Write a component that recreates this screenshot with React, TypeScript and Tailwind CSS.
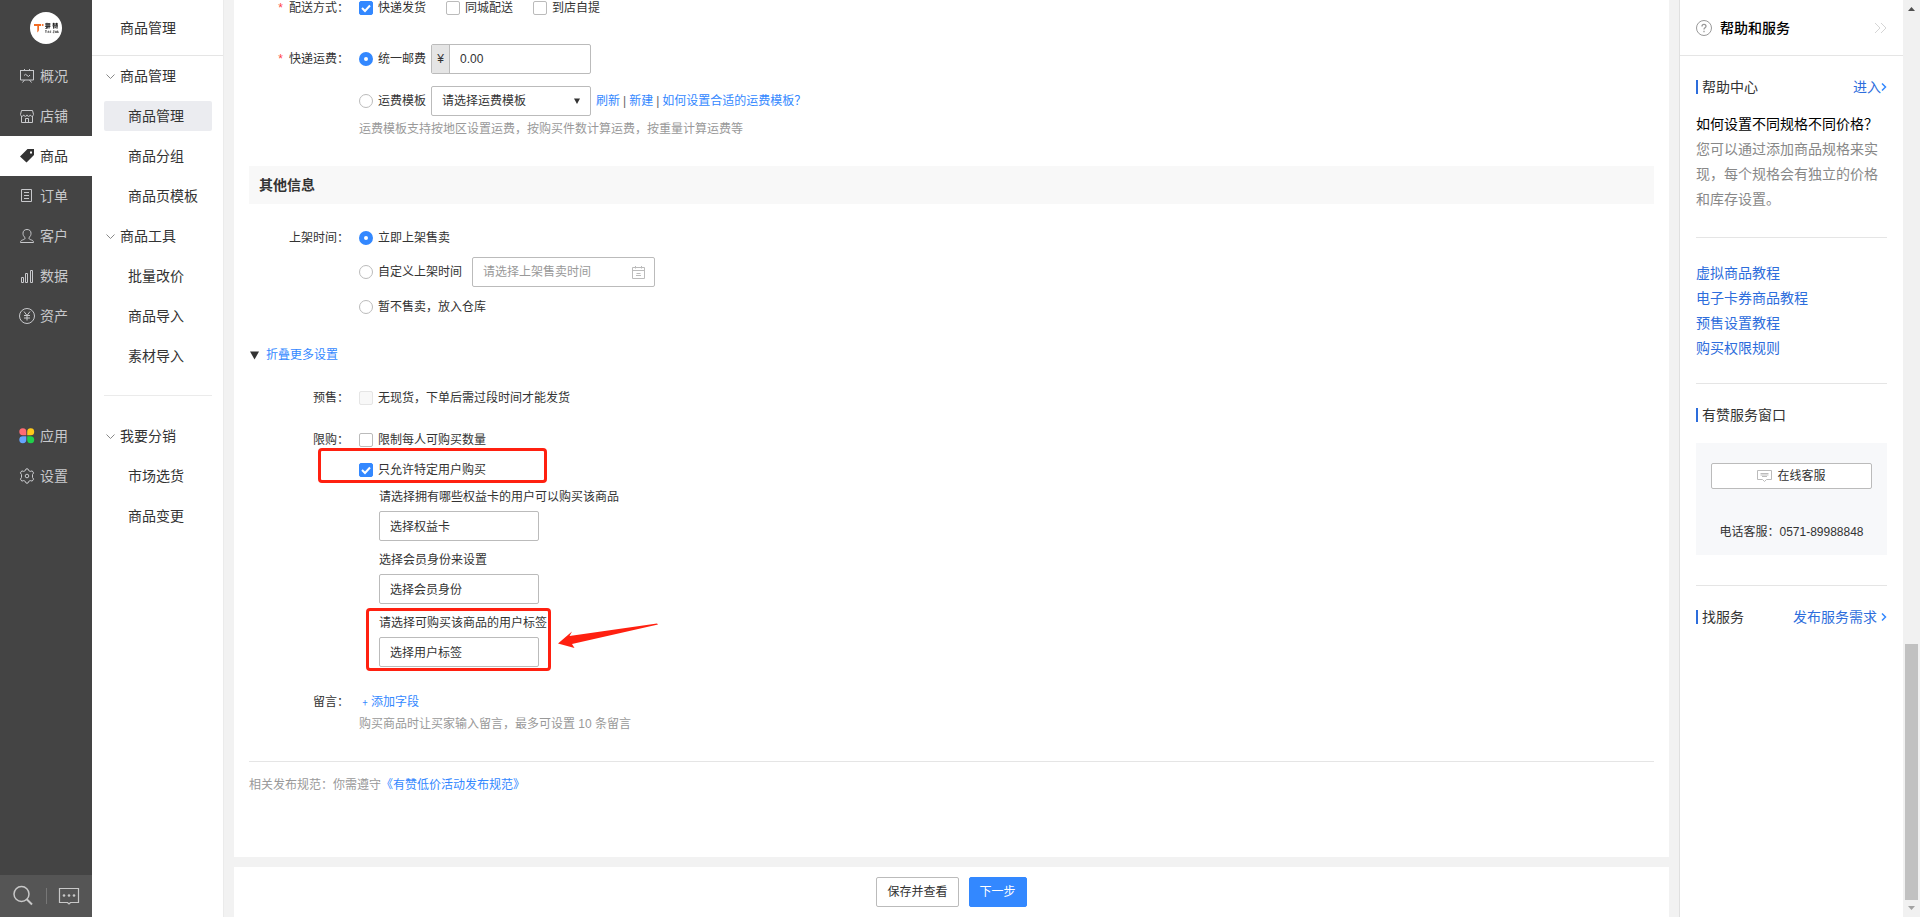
import type { ReactNode } from "react";

const line = { fill: "none", stroke: "currentColor", strokeWidth: 1 } as const;

function OverviewIcon() {
  return (
    <svg viewBox="0 0 16 16" className="h-4 w-4" {...line}>
      <path d="M1 2.500h14M1.500 2.500v9.500h13V2.500M5.500 1v1.500M10.500 1v1.500M5.500 12l-2 2.500M10.500 12l2 2.500M5 7.500l1.500-1.200 3 2.200L11 7" />
    </svg>
  );
}
function StoreIcon() {
  return (
    <svg viewBox="0 0 16 16" className="h-4 w-4" {...line}>
      <path d="M2.500 2.500h11l1 4c0 2-2.800 2.400-3.200.4-.4 2-3 2-3.300 0-.3 2-2.900 2-3.300 0-.4 2-3.200 1.600-3.200-.4zM2.500 8v6.500h11V8M6.500 14v-3.500h3V14" />
    </svg>
  );
}
function GoodsIcon() {
  return (
    <svg viewBox="0 0 16 16" className="h-4 w-4" fill="currentColor">
      <path fillRule="evenodd" d="M8.500 1H15v6L7.500 14.500 1 8.500zM11 3.500v2h2v-2z" />
    </svg>
  );
}
function OrderIcon() {
  return (
    <svg viewBox="0 0 16 16" className="h-4 w-4" {...line}>
      <path d="M2.500 1.500h10v12h-10zM5 4.500h5M5 7.500h5M5 10.500h5" />
    </svg>
  );
}
function CustomerIcon() {
  return (
    <svg viewBox="0 0 16 16" className="h-4 w-4" {...line}>
      <path d="M6 9.500C4.500 8.500 4 7 4 5.200 4 3 5.500 1.500 8 1.500s4 1.500 4 3.700c0 1.800-.5 3.300-2 4.300-.3 1.500.5 1.800 2.500 2.500 1.300.4 2 1 2 2.500h-13c0-1.500.7-2.100 2-2.500 2-.7 2.800-1 2.500-2.500z" />
    </svg>
  );
}
function DataIcon() {
  return (
    <svg viewBox="0 0 16 16" className="h-4 w-4" {...line}>
      <path d="M2.500 9.500h2v5h-2zM6.500 5.500h2v9h-2zM11.500 2.500h2v12h-2z" />
    </svg>
  );
}
function AssetsIcon() {
  return (
    <svg viewBox="0 0 16 16" className="h-4 w-4" {...line}>
      <circle cx="8" cy="8" r="7.500" />
      <path d="M5 3.500l3 4 3-4M8 7.500v5M5 7.500h6M5 10h6" />
    </svg>
  );
}
function AppsIcon() {
  return (
    <svg viewBox="0 0 16 16" className="h-4 w-4">
      <path d="M7.300 7.300H4A3.500 3.500 0 1 1 7.300 4z" fill="#ff6b75" />
      <path d="M8.200 7.300V4a3.500 3.500 0 1 1 3.500 3.300z" fill="#ffc91a" />
      <path d="M7.300 8.200v3.500A3.500 3.500 0 1 1 4 8.200z" fill="#65a5ff" />
      <path d="M8.200 8.200h3.500a3.500 3.500 0 1 1-3.500 3.500z" fill="#20d04b" />
    </svg>
  );
}
function SettingsIcon() {
  return (
    <svg viewBox="0 0 16 16" className="h-4 w-4" {...line}>
      <path d="M6.300 2.600L7 .9h2l.7 1.700 1.500.8 2-.5 1.400 2-1.100 1.700v2.800l1.100 1.700-1.400 2-2-.5-1.500.8-.7 1.700H7l-.7-1.700-1.500-.8-2 .5-1.400-2 1.100-1.700V6.600L1.400 4.900l1.400-2 2 .5z" />
      <circle cx="8" cy="8" r="1.800" />
    </svg>
  );
}

const primary: { name: string; icon: ReactNode; active?: boolean }[] = [
  { name: "概况", icon: <OverviewIcon /> },
  { name: "店铺", icon: <StoreIcon /> },
  { name: "商品", icon: <GoodsIcon />, active: true },
  { name: "订单", icon: <OrderIcon /> },
  { name: "客户", icon: <CustomerIcon /> },
  { name: "数据", icon: <DataIcon /> },
  { name: "资产", icon: <AssetsIcon /> },
];
const secondary: { name: string; icon: ReactNode; active?: boolean }[] = [
  { name: "应用", icon: <AppsIcon /> },
  { name: "设置", icon: <SettingsIcon /> },
];

function PrimaryList({ items }: { items: typeof primary }) {
  return (
    <ul>
      {items.map((i) => (
        <li key={i.name}>
          <a
            href="#"
            className={
              i.active
                ? "flex h-10 items-center gap-[5px] bg-white pl-[19px] text-[#333]"
                : "flex h-10 items-center gap-[5px] pl-[19px] text-[#c8c9cc]"
            }
          >
            {i.icon}
            {i.name}
          </a>
        </li>
      ))}
    </ul>
  );
}

function Sidebar() {
  return (
    <nav aria-label="主导航" className="flex w-[92px] shrink-0 flex-col bg-[#444] text-sm">
      <div className="flex h-14 items-center justify-center">
        <div className="flex h-8 w-8 items-center justify-center rounded-full bg-white">
          <svg viewBox="0 0 26 12" className="h-3 w-[26px]" role="img" aria-label="钛赞">
            <path d="M1 2h7v2H6v3c0 1.700-.5 2.700-1.700 3.500V4H1z" fill="#f26a21" />
            <circle cx="9.700" cy="2.900" r="1" fill="#f26a21" />
            <path
              d="M12 2h5.500M14 .8v6M12 4.200h5.500M12.500 6.500l2-1M16 1v5.500M19.500 2H25M20.700 .8v2.500M23.700 .8v2.500M19.500 3.800H25M20.700 4v2.700M24 4v2.700M22.200 4.500v1.700"
              stroke="#111"
              fill="none"
            />
            <path
              d="M12 8.700h1.800M12.900 8.700V11M15 11V9.200h1V11M17.600 8.500V11M20 8.800h1.400L20 10.700h1.400M22.500 11V9.200h1V11M24.600 11V8.700l.8 2.300"
              stroke="#444"
              strokeWidth=".7"
              fill="none"
            />
          </svg>
        </div>
      </div>
      <PrimaryList items={primary} />
      <div className="h-20" />
      <PrimaryList items={secondary} />
      <div className="mt-auto flex h-[42px] items-center bg-[#555] text-[#c8c8c8]">
        <button type="button" aria-label="搜索" className="flex flex-1 justify-center">
          <svg viewBox="0 0 22 22" className="h-[22px] w-[22px]" fill="none" stroke="currentColor" strokeWidth="1.500">
            <circle cx="9.500" cy="9" r="7.500" />
            <path d="M14.500 14l5.500 5.500" strokeWidth="2" />
          </svg>
        </button>
        <span className="h-4 w-px bg-[#777]" />
        <button type="button" aria-label="消息" className="flex flex-1 justify-center">
          <svg viewBox="0 0 22 20" className="h-5 w-[22px]" fill="none" stroke="currentColor" strokeWidth="1.200">
            <path d="M1.500 2.500h19v14h-8L11 18l-1.500-1.500h-8z" />
            <g fill="currentColor" stroke="none">
              <circle cx="6" cy="9.500" r="1.300" />
              <circle cx="11" cy="9.500" r="1.300" />
              <circle cx="16" cy="9.500" r="1.300" />
            </g>
          </svg>
        </button>
      </div>
    </nav>
  );
}

function MenuGroup({ title, items, active }: { title: string; items: string[]; active?: string }) {
  return (
    <section>
      <button type="button" className="flex h-10 w-full items-center gap-1 pl-[13px]">
        <svg viewBox="0 0 11 11" className="h-[11px] w-[11px] text-[#888]" fill="none" stroke="currentColor">
          <path d="M1.500 3.500l4 4 4-4" />
        </svg>
        {title}
      </button>
      <ul>
        {items.map((i) => (
          <li key={i} className="flex h-10 items-center pr-[11px] pl-3">
            <a
              href="#"
              className={
                i === active
                  ? "flex h-[30px] flex-1 items-center rounded-xs bg-[#ebecf0] pl-6"
                  : "flex h-[30px] flex-1 items-center pl-6"
              }
            >
              {i}
            </a>
          </li>
        ))}
      </ul>
    </section>
  );
}

function SubMenu() {
  return (
    <nav aria-label="商品导航" className="w-[131px] shrink-0 bg-white text-sm text-[#333]">
      <h1 className="flex h-14 items-center border-b border-[#e5e5e5] pl-7">商品管理</h1>
      <MenuGroup title="商品管理" items={["商品管理", "商品分组", "商品页模板"]} active="商品管理" />
      <MenuGroup title="商品工具" items={["批量改价", "商品导入", "素材导入"]} />
      <hr className="mt-[19px] mr-[11px] mb-5 ml-3 border-[#ebebeb]" />
      <MenuGroup title="我要分销" items={["市场选货", "商品变更"]} />
    </nav>
  );
}

function Check({ label, checked, disabled }: { label: string; checked?: boolean; disabled?: boolean }) {
  return (
    <label className="flex items-center gap-[5px]">
      <span className="grid">
        <input
          type="checkbox"
          defaultChecked={checked}
          disabled={disabled}
          className="peer col-start-1 row-start-1 h-[14px] w-[14px] appearance-none rounded-xs border border-[#bbb] bg-white checked:border-[#38f] checked:bg-[#38f] disabled:border-[#e5e5e5] disabled:bg-[#f8f8f8]"
        />
        <svg
          viewBox="0 0 14 14"
          className="pointer-events-none invisible col-start-1 row-start-1 h-[14px] w-[14px] peer-checked:visible"
          fill="none"
          stroke="#fff"
          strokeWidth="2"
        >
          <path d="M3 7l3 3 5-5.500" />
        </svg>
      </span>
      {label}
    </label>
  );
}

function Radio({ label, name, checked }: { label: string; name: string; checked?: boolean }) {
  return (
    <label className="flex items-center gap-[5px]">
      <input
        type="radio"
        name={name}
        defaultChecked={checked}
        className="h-[14px] w-[14px] appearance-none rounded-full border border-[#bbb] bg-white checked:border-5 checked:border-[#38f]"
      />
      {label}
    </label>
  );
}

function Row({ label, required, tall, children }: { label: string; required?: boolean; tall?: boolean; children: ReactNode }) {
  return (
    <div role="group" aria-label={label} className="grid grid-cols-[100px_1fr] items-start gap-x-[10px]">
      <div className={tall ? "flex h-[30px] items-center justify-end gap-[6px]" : "flex h-4 items-center justify-end gap-[6px]"}>
        {required && <span className="text-[#f44]">*</span>}
        <span>{label}：</span>
      </div>
      <div>{children}</div>
    </div>
  );
}

function Picker({ id, label, value }: { id: string; label: string; value: string }) {
  return (
    <div>
      <label htmlFor={id} className="block">
        {label}
      </label>
      <input
        id={id}
        readOnly
        value={value}
        className="mt-[6px] block h-[30px] w-40 rounded-xs border border-[#bbb] bg-white px-[10px] pb-[2px]"
      />
    </div>
  );
}

const link = "text-[#38f]";

function GoodsForm() {
  return (
    <form className="flex min-h-0 flex-1 flex-col">
      <div className="flex-1 overflow-hidden bg-white px-[15px]">
        <Row label="配送方式" required>
          <div className="flex gap-5">
            <Check label="快递发货" checked />
            <Check label="同城配送" />
            <Check label="到店自提" />
          </div>
        </Row>
        <div className="mt-7">
          <Row label="快递运费" required tall>
            <div className="flex h-[30px] items-center gap-[5px]">
              <Radio name="fee" label="统一邮费" checked />
              <div className="flex h-[30px] w-40 overflow-hidden rounded-xs border border-[#bbb]">
                <span className="flex w-[18px] items-center justify-center border-r border-[#bbb] bg-[#e5e5e5]">¥</span>
                <input aria-label="统一邮费金额" defaultValue="0.00" className="min-w-0 flex-1 px-[10px]" />
              </div>
            </div>
            <div className="mt-3 flex h-[30px] items-center gap-[5px]">
              <Radio name="fee" label="运费模板" />
              <div className="grid w-40 items-center">
                <select
                  aria-label="运费模板选择"
                  className="col-start-1 row-start-1 h-[30px] appearance-none rounded-xs border border-[#bbb] bg-white px-[10px]"
                >
                  <option>请选择运费模板</option>
                </select>
                <svg viewBox="0 0 8 8" className="pointer-events-none col-start-1 row-start-1 mr-[10px] h-2 w-2 justify-self-end">
                  <path d="M1 1.500h6L4 7z" fill="#333" />
                </svg>
              </div>
              <div className="flex gap-[3px] text-[#666]">
                <a href="#" className={link}>刷新</a>
                <span>|</span>
                <a href="#" className={link}>新建</a>
                <span>|</span>
                <a href="#" className={link}>如何设置合适的运费模板？</a>
              </div>
            </div>
            <p className="mt-[5px] text-[#999]">运费模板支持按地区设置运费，按购买件数计算运费，按重量计算运费等</p>
          </Row>
        </div>

        <h2 className="mt-[29px] mb-[26px] flex h-[38px] items-center bg-[#f8f8f8] pl-[10px] text-sm font-bold">其他信息</h2>

        <Row label="上架时间">
          <Radio name="time" label="立即上架售卖" checked />
          <div className="mt-[11px] flex items-center gap-[10px]">
            <Radio name="time" label="自定义上架时间" />
            <div className="flex h-[30px] w-[183px] items-center rounded-xs border border-[#bbb] pr-[9px] pl-[10px]">
              <input
                aria-label="上架售卖时间"
                placeholder="请选择上架售卖时间"
                className="min-w-0 flex-1 placeholder:text-[#999]"
              />
              <svg viewBox="0 0 13 13" className="h-[13px] w-[13px] text-[#bbb]" fill="none" stroke="currentColor">
                <path d="M.5 1.500h12v11H.5zM.5 4.500h12M3.500 0v2.500M9.500 0v2.500M4.500 7.500h4M4 9.500h5" />
              </svg>
            </div>
          </div>
          <div className="mt-3">
            <Radio name="time" label="暂不售卖，放入仓库" />
          </div>
        </Row>

        <button type="button" className="mt-8 mb-[27px] flex items-center gap-[7px] pl-px text-[#38f]">
          <svg viewBox="0 0 9 9" className="h-[9px] w-[9px]">
            <path d="M0 .5h9L4.500 8.500z" fill="#333" />
          </svg>
          折叠更多设置
        </button>

        <Row label="预售">
          <Check label="无现货，下单后需过段时间才能发货" disabled />
        </Row>
        <div className="mt-[26px]">
          <Row label="限购">
            <Check label="限制每人可购买数量" />
            <div className="relative mt-[14px]">
              <Check label="只允许特定用户购买" checked />
              <span className="pointer-events-none absolute -top-[14px] -left-[41px] h-[35px] w-[229px] rounded-sm border-3 border-[#ff2010]" />
            </div>
            <div className="mt-[11px] flex flex-col gap-[11px] pl-5">
              <Picker id="card" label="请选择拥有哪些权益卡的用户可以购买该商品" value="选择权益卡" />
              <Picker id="member" label="选择会员身份来设置" value="选择会员身份" />
              <div className="relative">
                <Picker id="tag" label="请选择可购买该商品的用户标签" value="选择用户标签" />
                <span className="pointer-events-none absolute -top-[7px] -left-[13px] h-[63px] w-[185px] rounded-sm border-3 border-[#ff2010]" />
                <svg viewBox="0 0 102 28" className="pointer-events-none absolute top-[7px] left-[178px] h-7 w-[102px]" fill="#ff2010">
                  <path d="M1 21.500L15 9.500 12.500 14 100 1.500 101 2.500 15 22 17.500 26z" />
                </svg>
              </div>
            </div>
          </Row>
        </div>
        <div className="mt-[27px]">
          <Row label="留言">
            <button type="button" className="block text-[#38f]">﹢添加字段</button>
            <p className="mt-[6px] text-[#999]">购买商品时让买家输入留言，最多可设置 10 条留言</p>
          </Row>
        </div>
        <p className="mt-[29px] border-t border-[#e5e5e5] pt-[15px] text-[#999]">
          相关发布规范：你需遵守
          <a href="#" className={link}>《有赞低价活动发布规范》</a>
        </p>
      </div>
      <div className="mt-[10px] flex h-[50px] shrink-0 items-start justify-center gap-[10px] bg-white pt-[10px]">
        <button type="button" className="h-[30px] rounded-xs border border-[#bbb] px-[10px]">保存并查看</button>
        <button type="submit" className="h-[30px] rounded-xs border border-[#38f] bg-[#38f] px-[10px] text-white">下一步</button>
      </div>
    </form>
  );
}

function PanelTitle({ title, more, spaced }: { title: string; more?: string; spaced?: boolean }) {
  return (
    <div className="flex h-[14px] items-center justify-between">
      <h3 className="flex items-center gap-1">
        <span className="h-[14px] w-[2px] bg-[#2d6ddc]" />
        {title}
      </h3>
      {more && (
        <a href="#" className={spaced ? "flex items-center gap-1 text-[#2d6ddc]" : "flex items-center text-[#2d6ddc]"}>
          {more}
          <svg viewBox="0 0 6 10" className="h-[10px] w-[6px]" fill="none" stroke="#38f" strokeWidth="1.500">
            <path d="M1 1.500L4.500 5 1 8.500" />
          </svg>
        </a>
      )}
    </div>
  );
}

function HelpPanel() {
  return (
    <aside className="w-[224px] shrink-0 border-l border-[#e0e0e0] bg-white text-sm text-[#333]">
      <header className="flex h-14 items-center border-b border-[#e5e5e5] px-4">
        <svg viewBox="0 0 16 16" className="mr-2 h-4 w-4 text-[#999]" fill="none" stroke="currentColor">
          <circle cx="8" cy="8" r="7.500" />
          <path d="M6 6.500c0-2.800 4-2.600 4-.2C10 7.800 8 7.800 8 9.500M8 10.800v1.400" strokeWidth="1.300" />
        </svg>
        <h2 className="font-medium text-black">帮助和服务</h2>
        <button type="button" aria-label="收起" className="ml-auto">
          <svg viewBox="0 0 13 12" className="h-3 w-[13px]" fill="none" stroke="#d5d5d5">
            <path d="M1 1l5 5-5 5M7 1l5 5-5 5" />
          </svg>
        </button>
      </header>
      <div className="px-4 pt-6">
        <PanelTitle title="帮助中心" more="进入" />
        <h4 className="mt-[18px] leading-[25px] text-black">如何设置不同规格不同价格？</h4>
        <p className="leading-[25px] text-[#888]">您可以通过添加商品规格来实现，每个规格会有独立的价格和库存设置。</p>
        <hr className="mt-[25px] mb-[23px] border-[#e5e5e5]" />
        <ul className="leading-[25px] text-[#2d6ddc]">
          {["虚拟商品教程", "电子卡券商品教程", "预售设置教程", "购买权限规则"].map((t) => (
            <li key={t}>
              <a href="#">{t}</a>
            </li>
          ))}
        </ul>
        <hr className="mt-[22px] mb-6 border-[#e5e5e5]" />
        <PanelTitle title="有赞服务窗口" />
        <div className="mt-[21px] flex h-28 flex-col items-center bg-[#f7f8fa] px-[15px] pt-5 text-xs">
          <button type="button" className="flex h-[26px] w-full items-center justify-center gap-[5px] rounded-xs border border-[#bbb] bg-white">
            <svg viewBox="0 0 15 12" className="h-3 w-[15px] text-[#bbb]" fill="none" stroke="currentColor">
              <path d="M.5.5h14v9h-5l-2 2-2-2h-5zM3.500 3.500h8M3.500 5h8M5 6.500h5" />
            </svg>
            在线客服
          </button>
          <p className="mt-[35px]">电话客服：0571-89988848</p>
        </div>
        <hr className="mt-[30px] mb-6 border-[#e5e5e5]" />
        <PanelTitle title="找服务" more="发布服务需求" spaced />
      </div>
    </aside>
  );
}

function Scrollbar() {
  return (
    <div aria-hidden="true" className="flex w-[17px] shrink-0 flex-col items-center bg-[#f1f1f1]">
      <svg viewBox="0 0 17 17" className="h-[17px] w-[17px]" fill="#505050">
        <path d="M5 11l3.500-4 3.500 4z" />
      </svg>
      <div className="mt-auto h-64 w-[13px] bg-[#c1c1c1]" />
      <svg viewBox="0 0 17 17" className="h-[17px] w-[17px]" fill="#a3a3a3">
        <path d="M5 6l3.500 4L12 6z" />
      </svg>
    </div>
  );
}

export default function App() {
  return (
    <div
      lang="zh-CN"
      className="flex h-screen overflow-hidden bg-[#f2f2f2] font-['Liberation_Sans','Noto_Sans_CJK_SC',sans-serif] text-xs text-[#333]"
    >
      <Sidebar />
      <SubMenu />
      <main className="flex min-w-0 flex-1 border-l border-[#ebebeb] px-[10px]">
        <GoodsForm />
      </main>
      <HelpPanel />
      <Scrollbar />
    </div>
  );
}
